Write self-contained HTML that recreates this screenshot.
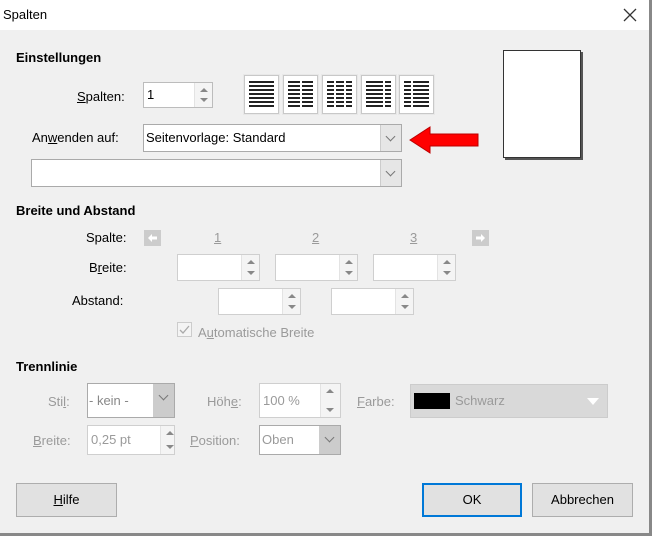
<!DOCTYPE html>
<html><head><meta charset="utf-8"><style>
*{box-sizing:border-box;margin:0;padding:0}
body{width:652px;height:536px;overflow:hidden;background:#f0f0f0;font-family:"Liberation Sans",sans-serif;font-size:13px;color:#000;position:relative}
.a{position:absolute}
.t{position:absolute;white-space:nowrap;line-height:16px}
.b{font-weight:bold}
.g{color:#9a9a9a}
.box{position:absolute;background:#fff;border:1px solid #bcbcbc}
.dis{border-color:#cfcfcf}
.sp{position:absolute;right:0;top:0;bottom:0;width:18px;border-left:1px solid #e3e3e3;background:#f4f4f4}
.sp:before{content:"";position:absolute;left:5px;top:5px;border:4px solid transparent;border-bottom:4px solid #888;border-top:0}
.sp:after{content:"";position:absolute;left:5px;bottom:5px;border:4px solid transparent;border-top:4px solid #888;border-bottom:0}
.dd{position:absolute;right:0;top:0;bottom:0;width:21px;background:#e6e6e6;border-left:1px solid #ccc}
.dd:after{content:"";position:absolute;left:6px;top:8px;width:6px;height:6px;border-right:1px solid #777;border-bottom:1px solid #777;transform:rotate(45deg)}
.btn{position:absolute;background:#e1e1e1;border:1px solid #adadad;text-align:center;line-height:31px}
.col{position:absolute;top:75px;width:35px;height:39px;background:#fff;border:1px solid #c8c8c8;box-shadow:0 0 0 1px #e8e8e8}
.col i{position:absolute;left:4px;right:4px;top:5px;bottom:5px;background:repeating-linear-gradient(#222 0 2px,#fff 2px 4px)}
.col b{position:absolute;top:5px;bottom:5px;width:2px;background:#fff}
u{text-decoration:underline}
</style></head><body>
<div class="a" style="left:0;top:0;width:652px;height:30px;background:#fff"></div>
<div class="t" style="left:3px;top:7px">Spalten</div>
<svg class="a" style="left:623px;top:8px" width="14" height="14"><path d="M1 1L13 13M13 1L1 13" stroke="#333" stroke-width="1.3"/></svg>
<div class="a" style="left:649px;top:0;width:3px;height:536px;background:#888"></div>
<div class="a" style="left:0;top:533px;width:652px;height:3px;background:#888"></div>

<div class="t b" style="left:16px;top:50px">Einstellungen</div>
<div class="t" style="left:77px;top:89px"><u>S</u>palten:</div>
<div class="box" style="left:143px;top:82px;width:70px;height:26px"><span class="t" style="left:3px;top:4px">1</span><div class="sp"></div></div>
<div class="col" style="left:244px"><i></i></div>
<div class="col" style="left:283px"><i></i><b style="left:16px"></b></div>
<div class="col" style="left:322px"><i></i><b style="left:11px"></b><b style="left:21px"></b></div>
<div class="col" style="left:361px"><i></i><b style="left:21px"></b></div>
<div class="col" style="left:399px"><i></i><b style="left:11px"></b></div>

<div class="t" style="left:32px;top:130px">An<u>w</u>enden auf:</div>
<div class="box" style="left:143px;top:124px;width:259px;height:28px;border-color:#aaa"><span class="t" style="left:2px;top:5px">Seitenvorlage: Standard</span><div class="dd"></div></div>
<svg class="a" style="left:408px;top:125px" width="72" height="30"><path d="M2 15L22 2V9H70V21H22V28Z" fill="#f00" stroke="#b00" stroke-width="1"/></svg>
<div class="box" style="left:31px;top:159px;width:371px;height:28px;border-color:#aaa"><div class="dd"></div></div>

<div class="a" style="left:503px;top:50px;width:78px;height:108px;background:#fff;border:1px solid #333;box-shadow:2px 2px 0 #555"></div>

<div class="t b" style="left:16px;top:203px">Breite und Abstand</div>
<div class="t" style="left:86px;top:230px">Spalte:</div>
<svg class="a" style="left:144px;top:230px" width="17" height="16"><rect width="17" height="16" fill="#ccc"/><path d="M4 8L8 4V6.5H13V9.5H8V12Z" fill="#fff"/></svg>
<div class="t g" style="left:214px;top:230px"><u>1</u></div>
<div class="t g" style="left:312px;top:230px"><u>2</u></div>
<div class="t g" style="left:410px;top:230px"><u>3</u></div>
<svg class="a" style="left:472px;top:230px" width="17" height="16"><rect width="17" height="16" fill="#ccc"/><path d="M13 8L9 4V6.5H4V9.5H9V12Z" fill="#fff"/></svg>
<div class="t" style="left:89px;top:260px">B<u>r</u>eite:</div>
<div class="box dis" style="left:177px;top:254px;width:83px;height:27px"><div class="sp"></div></div>
<div class="box dis" style="left:275px;top:254px;width:83px;height:27px"><div class="sp"></div></div>
<div class="box dis" style="left:373px;top:254px;width:83px;height:27px"><div class="sp"></div></div>
<div class="t" style="left:72px;top:293px">Abstand:</div>
<div class="box dis" style="left:218px;top:288px;width:83px;height:27px"><div class="sp"></div></div>
<div class="box dis" style="left:331px;top:288px;width:83px;height:27px"><div class="sp"></div></div>
<div class="a" style="left:177px;top:322px;width:15px;height:15px;border:1px solid #ccc;background:#f4f4f4"></div>
<svg class="a" style="left:178px;top:323px" width="13" height="13"><path d="M2 7L5 10L11 3" stroke="#aaa" fill="none" stroke-width="1.3"/></svg>
<div class="t g" style="left:198px;top:325px">A<u>u</u>tomatische Breite</div>

<div class="t b" style="left:16px;top:359px">Trennlinie</div>
<div class="t g" style="left:48px;top:394px">Sti<u>l</u>:</div>
<div class="box" style="left:87px;top:383px;width:88px;height:35px;border-color:#aaa"><span class="t" style="left:1px;top:9px;color:#888">- kein -</span><div class="dd" style="background:#ccc"></div></div>
<div class="t g" style="left:207px;top:394px">Höh<u>e</u>:</div>
<div class="box dis" style="left:259px;top:383px;width:82px;height:35px"><span class="t g" style="left:3px;top:9px">100 %</span><div class="sp" style="width:20px"></div></div>
<div class="t g" style="left:357px;top:394px"><u>F</u>arbe:</div>
<div class="a" style="left:410px;top:384px;width:198px;height:34px;background:#d9d9d9;border:1px solid #ccc"></div>
<div class="a" style="left:414px;top:393px;width:36px;height:16px;background:#000"></div>
<div class="t g" style="left:455px;top:393px">Schwarz</div>
<div class="a" style="left:587px;top:398px;border:6px solid transparent;border-top:7px solid #fff;border-bottom:0"></div>
<div class="t g" style="left:33px;top:433px"><u>B</u>reite:</div>
<div class="box dis" style="left:87px;top:425px;width:88px;height:30px"><span class="t g" style="left:3px;top:6px">0,25 pt</span><div class="sp" style="width:14px"></div></div>
<div class="t g" style="left:190px;top:433px"><u>P</u>osition:</div>
<div class="box" style="left:259px;top:425px;width:82px;height:30px;border-color:#aaa"><span class="t g" style="left:2px;top:6px">Oben</span><div class="dd" style="background:#ccc"></div></div>

<div class="btn" style="left:16px;top:483px;width:101px;height:34px"><u>H</u>ilfe</div>
<div class="btn" style="left:422px;top:483px;width:100px;height:34px;border:2px solid #0078d7;line-height:29px">OK</div>
<div class="btn" style="left:532px;top:483px;width:101px;height:34px">Abbrechen</div>
</body></html>
